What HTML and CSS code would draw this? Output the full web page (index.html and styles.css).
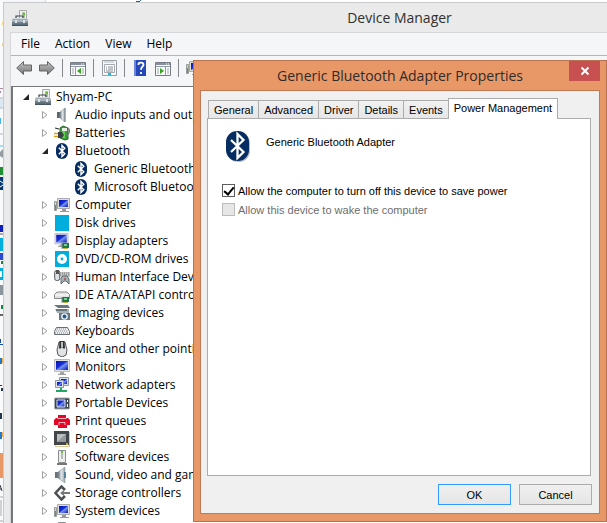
FILE: index.html
```html
<!DOCTYPE html>
<html lang="en">
<head>
<meta charset="utf-8">
<title>Device Manager</title>
<link rel="stylesheet" href="styles.css">
</head>
<body>
<svg class="defs" aria-hidden="true">
  <defs>
    <linearGradient id="metal" x1="0" y1="0" x2="0" y2="1"><stop offset="0" stop-color="#b5bec5"/><stop offset="1" stop-color="#536574"/></linearGradient>
    <linearGradient id="silver" x1="0" y1="0" x2="1" y2="0"><stop offset="0" stop-color="#59656d"/><stop offset=".45" stop-color="#e4e8ea"/><stop offset="1" stop-color="#9ba3a8"/></linearGradient>
    <linearGradient id="screen" x1="0" y1="0" x2="1" y2="1"><stop offset="0" stop-color="#0510b8"/><stop offset=".45" stop-color="#1732d8"/><stop offset=".55" stop-color="#7893f4"/><stop offset="1" stop-color="#0618b0"/></linearGradient>
    <linearGradient id="grayarrow" x1="0" y1="0" x2="0" y2="1"><stop offset="0" stop-color="#c2c2c2"/><stop offset="1" stop-color="#777"/></linearGradient>
    <symbol id="closed" viewBox="0 0 8 8"><path d="M1.5 0.5v7L6 4z" fill="#fff" stroke="#a0a0a0"/></symbol>
    <symbol id="toolbox" viewBox="0 0 16 16"><path d="M7.5.5h7v9h-7z" fill="#f0f2f0" stroke="#a7aaa8"/><path d="M10.5 2.5h2v5h-2z" fill="#c4dfaf" stroke="#8da582" stroke-width=".6"/><path d="M11 3h2v2h-2z" fill="#63bd2c"/><path d="M4 8V6h7v2" fill="none" stroke="#3c4347" stroke-width="1.2"/><path d="M1 8h14l1 3v4H0v-4z" fill="url(#metal)"/><path d="M1.5 8.5h13M.5 11h15" stroke="#dbe3e7" stroke-width=".8"/><path d="M3 10h2v3H3zm8 0h2v3h-2z" fill="#dce1e2"/><path d="M0 15.5h16" stroke="#46545e"/></symbol>
    <symbol id="speaker" viewBox="0 0 16 16"><path d="M3 5h3v6H3z" fill="#59656d"/><path d="M6 5l5-4v14l-5-4z" fill="url(#silver)" stroke="#929da4" stroke-width=".6"/><path d="M11 1v14" stroke="#7b878e"/></symbol>
    <symbol id="sound" viewBox="0 0 16 16"><path d="M1 5h4v6H1z" fill="#66737c"/><path d="M4 5l7-5v16l-7-5z" fill="url(#silver)" stroke="#8a979f" stroke-width=".6"/><path d="M11 5v6" stroke="#35708d" stroke-width="1.5"/></symbol>
    <symbol id="battery" viewBox="0 0 16 16"><path d="M6 3l3-2 5 2v11l-3 1-5-2z" fill="#36a336" stroke="#28672b"/><path d="M8 3h5v3H8z" fill="#e6eee4"/><path d="M8 6h3v7H8z" fill="#62ce50"/><path d="M14 3c3 2 1 7-2 7" fill="none" stroke="#777" stroke-width="1.2"/><path d="M1 3l4 1" stroke="#222"/><path d="M0 8.5h5m-5 3h5" stroke="#d6a318" stroke-width="1.5"/><path d="M4 7h4l2 3-2 3H4z" fill="#3c4144"/></symbol>
    <symbol id="bluetooth" viewBox="0 0 16 16"><rect x="2" y="0" width="12" height="16" rx="6" fill="#062d62"/><path d="M4.800 4.800l6 6L8 13.600V2.400l2.800 2.800-6 6" fill="none" stroke="#fff" stroke-width="1.4"/></symbol>
    <symbol id="monitor" viewBox="0 0 16 16"><path d="M.5.5h15v12H.5z" fill="#e2e4e1" stroke="#bbb"/><path d="M2 2h12v9H2z" fill="url(#screen)"/><path d="M6 13h4v2H6z" fill="#a6a9a8"/><path d="M4 15.3h8" stroke="#888"/></symbol>
    <symbol id="computer" viewBox="0 0 16 16"><path d="M.5 4.5h2v9h-2z" fill="#d6d6d1" stroke="#959b96"/><path d="M1 8h1v5H1z" fill="#49a652"/><path d="M3.500 1.500h12v10h-12z" fill="#dedfdb" stroke="#aaa"/><path d="M5 3h9v7H5z" fill="url(#screen)"/><path d="M8 12h4v2H8zM6 14h9v1H6z" fill="#999"/></symbol>
    <symbol id="disk" viewBox="0 0 16 16"><path d="M1 0h14v16H1z" fill="#00aede"/></symbol>
    <symbol id="card" viewBox="0 0 16 16"><path d="M8 10h7v5H8z" fill="#147a46"/><path d="M8 10v6" stroke="#888"/><path d="M10 11h3v2h-3z" fill="#83c996"/><path d="M9 15.5h5" stroke="#d0ad35"/></symbol>
    <symbol id="display" viewBox="0 0 16 16"><use href="#monitor" width="15" height="14"/><use href="#card"/></symbol>
    <symbol id="dvd" viewBox="0 0 16 16"><path d="M1 0h14v16H1z" fill="#00aede"/><circle cx="8" cy="8" r="5" fill="#fff"/><circle cx="8" cy="8" r="1.4" fill="#00aede"/></symbol>
    <symbol id="hid" viewBox="0 0 16 16"><rect x=".7" y="1.5" width="5" height="10" rx="2" fill="#dee2e4" stroke="#4f5559"/><path d="M2 1h3v4H2z" fill="#555"/><path d="M6 3h10v5H6z" fill="#c3c7c9"/><path d="M6 4h9M6 6h9" stroke="#777" stroke-dasharray="1 1"/><path d="M7 15V9l2-2h4l2 3v5l-3-3h-2z" fill="#a4b1b9" stroke="#5e6a72"/><circle cx="11" cy="10" r="1" fill="#ca3f4a"/></symbol>
    <symbol id="ide" viewBox="0 0 16 16"><path d="M.5 7.500L3 5h10l2.500 2.500v4h-15z" fill="#dfe2e2" stroke="#888"/><path d="M1 8h14" stroke="#fff"/><use href="#card"/></symbol>
    <symbol id="imaging" viewBox="0 0 16 16"><path d="M0 0h14l2 3H4z" fill="#6b7780"/><path d="M1 4h14v4H3z" fill="#a7b2b8"/><path d="M2 5h11" stroke="#31383c"/><path d="M5 8h11v7H5z" fill="#687680"/><circle cx="10.5" cy="11.5" r="3.3" fill="#edf2f4"/><circle cx="10.5" cy="11.5" r="1.9" fill="#215b8d"/></symbol>
    <symbol id="keyboard" viewBox="0 0 16 16"><path d="M2.500 4.500h11l2 4v3H.5v-3z" fill="#eceef0" stroke="#686e75"/><path d="M3 6h10M2 8h12M1 10h14" stroke="#868c93" stroke-dasharray="1 1"/></symbol>
    <symbol id="mouse" viewBox="0 0 16 16"><path d="M5 1h6l2 8-1 5-4 2-4-2-1-5z" fill="#dfe3e5" stroke="#555"/><path d="M5.500 0L5 7l1 1 2-2 2 2 1-1-.5-7z" fill="#303437"/><path d="M8 1v5" stroke="#eee" stroke-width="1.500"/></symbol>
    <symbol id="network" viewBox="0 0 16 16"><path d="M5.500.5h9v8h-9z" fill="#d4dce6" stroke="#939da8"/><path d="M7 2h6v5H7z" fill="url(#screen)"/><path d="M1.500 3.500h8v7h-8z" fill="#dfe3eb" stroke="#8c98a6"/><path d="M3 5h5v4H3z" fill="url(#screen)"/><path d="M7 11v3" stroke="#20a963" stroke-width="2"/><path d="M2 14h11" stroke="#20a963" stroke-width="2"/></symbol>
    <symbol id="portable" viewBox="0 0 16 16"><rect x=".5" y="3" width="15" height="11" rx="1" fill="#3e4650" stroke="#a9aeb2"/><path d="M3 5h8v7H3z" fill="url(#screen)" stroke="#dce2ef"/><path d="M13 5h1v2h-1zm0 4h1v3h-1z" fill="#fff"/></symbol>
    <symbol id="printer" viewBox="0 0 16 16"><path d="M4 2h8v3h2l2 2v5h-3v3H4v-3H0V7l2-2h2z" fill="#e50728"/><path d="M3.500 5.500h9M5 12V9.500h6V12" fill="none" stroke="#fff" stroke-width=".7"/><path d="M6 10h4v5H6z" fill="#e50728"/></symbol>
    <symbol id="processor" viewBox="0 0 16 16"><path d="M1.500 1.500h14v14h-14z" fill="none" stroke="#bf8f25" stroke-dasharray="1 1"/><path d="M0 0h15v14H0z" fill="#42464a"/><path d="M3 3h9v8H3z" fill="#b9bcbc"/><path d="M3 11l9-8v8z" fill="#92979a"/><path d="M12 12h2v2h-2z" fill="#d8a52e"/></symbol>
    <symbol id="software" viewBox="0 0 16 16"><path d="M4.500 1.500h7v12h-7z" fill="#eceeed" stroke="#898d8e"/><path d="M7 3h2v7H7z" fill="#b6bbb8"/><path d="M7 2h2v2H7z" fill="#62c63b"/><path d="M3 15h10" stroke="#777" stroke-width="2"/></symbol>
    <symbol id="storage" viewBox="0 0 16 16"><path d="M11 5L7.500 1.500 1.500 8l6 6.500L11 11" fill="none" stroke="#4d5052" stroke-width="2.500"/><path d="M6 8l4-3v2h6v2h-6v2z" fill="#777"/></symbol>
  </defs>
</svg>

<svg class="desktop-edge" viewBox="0 0 3 523" width="3" height="523" aria-hidden="true">
  <path d="M0 0h3v523H0z" fill="#f8fafc"/><path d="M2 22h1v3H2zm0 21h1v3H2z" fill="#f5d592"/><path d="M0 88h3v1H0zm0 3h1v2H0z" fill="#ad889f"/>
  <path d="M0 99h3v8H0z" fill="#dbe7f5"/><path d="M0 98h3M0 108h3M0 134h3" stroke="#a9b2bf"/><path d="M0 118h1v6H0z" fill="#49b4e7"/><path d="M0 146h3" stroke="#55bbe5"/>
  <path d="M0 152l3-3v9l-3-2z" fill="#929ca2"/><path d="M0 167h3v8H0z" fill="#218d34"/><path d="M0 177h3v13H0z" fill="#073773"/><path d="M0 181l3 2M0 187l3-2" stroke="#fff"/>
  <path d="M0 225h3v7H0z" fill="#1020bd"/><path d="M0 233h3v2H0z" fill="#aaa"/><path d="M0 238h3v13H0zm0 30h3v12H0z" fill="#00aede"/><path d="M0 253h3v7H0z" fill="#2849d3"/><path d="M1 261h2v3H1zm0 44h2v4H1z" fill="#188345"/><path d="M0 271h2v6H0z" fill="#fff"/><path d="M0 285h3v10H0z" fill="#89949d"/><path d="M0 314h3v2H0z" fill="#666"/>
  <path d="M0 344h3v1H0zm0-5h1v4H0z" fill="#164c9a"/><path d="M0 358h2v6H0zm0 74h2v7H0z" fill="#2478c8"/><path d="M2 358h1v5H2zm0 74h1v5H2z" fill="#efb255"/><path d="M0 385h2v1H0zm1 3h2v3H1zm-1 25h2v6H0z" fill="#23364c"/>
  <path d="M0 453h3v25H0z" fill="#e89867"/><path d="M0 485l2 6M0 489h2" stroke="#334"/><path d="M0 497h3M1 500v16M0 521h3" stroke="#aaa"/>
</svg>
<svg class="desktop-top" viewBox="0 0 604 2" aria-hidden="true"><path d="M0 0h42v2H0z" fill="#f4f6f9"/><path d="M42 0h1v2h-1z" fill="#d5d8dc"/><path d="M133 1h4v1h-4z" fill="#44546a"/><path d="M137 0h1v1h-1z" fill="#3976b5"/></svg>

<main class="manager">
  <header class="manager-title"><svg class="icon"><use href="#toolbox"/></svg><h1>Device Manager</h1></header>
  <div class="client">
    <nav class="menu"><button>File</button><button>Action</button><button>View</button><button>Help</button></nav>
    <div class="toolbar">
      <button aria-label="Back"><svg class="icon" viewBox="0 0 16 16"><path d="M.7 8L7.500 1.500V5h8v6h-8v3.500z" fill="url(#grayarrow)" stroke="#646464"/></svg></button>
      <button aria-label="Forward"><svg class="icon" viewBox="0 0 16 16"><path d="M15.300 8L8.500 1.500V5h-8v6h8v3.500z" fill="url(#grayarrow)" stroke="#646464"/></svg></button>
      <i class="separator"></i>
      <button aria-label="Show console tree"><svg class="icon" viewBox="0 0 16 16"><path d="M.5 2.500h15v13H.5z" fill="#fafcfb" stroke="#777d85"/><path d="M1 3h14v2H1z" fill="#8690a0"/><path d="M11 4h3" stroke="#fff" stroke-dasharray="1 1"/><path d="M1 6.500h14M5.500 7v8" stroke="#939ba5"/><path d="M2 9h2m-2 2h2m-2 2h2m8-4h2m-2 2h2m-2 2h2" stroke="#a2a8ad"/><path d="M11 8v6L7 11z" fill="#36a321"/></svg></button>
      <i class="separator"></i>
      <button aria-label="Properties"><svg class="icon" viewBox="0 0 16 16"><path d="M1.500.5h14v15h-14z" fill="#f6f8f9" stroke="#999fa5"/><path d="M3.500 4.500h10v8h-10z" fill="#fff" stroke="#a7aaaf"/><path d="M3 2h10" stroke="#b4bac0"/><path d="M5 7h1m1 0h5M5 9h1m1 0h5M5 11h7" stroke="#868c94"/><path d="M7 14h3" stroke="#21b8df" stroke-width="2"/></svg></button>
      <i class="separator"></i>
      <button aria-label="Help topics"><svg class="icon" viewBox="0 0 16 16"><path d="M2 0h12v16H2z" fill="#2649b9"/><path d="M2 0h2v16H2z" fill="#6d86d8"/><path d="M6.500 5V4c0-2 5-2 5 .7 0 2-2.500 2-2.500 5M9 12v2" fill="none" stroke="#fff" stroke-width="1.8"/></svg></button>
      <button aria-label="Show action pane"><svg class="icon" viewBox="0 0 16 16"><path d="M.5 2.500h15v13H.5z" fill="#fafcfb" stroke="#777d85"/><path d="M1 3h14v2H1z" fill="#8690a0"/><path d="M11 4h3" stroke="#fff" stroke-dasharray="1 1"/><path d="M1 6.500h14M10.500 7v8" stroke="#939ba5"/><path d="M12 9h2m-2 2h2m-2 2h2M2 9h2m-2 2h2m-2 2h2" stroke="#a2a8ad"/><path d="M5 8v6l4-3z" fill="#36a321"/></svg></button>
      <i class="separator"></i>
      <button aria-label="Scan for hardware changes"><svg class="icon"><use href="#computer"/></svg></button>
    </div>
    <ul class="tree">
      <li class="root"><svg class="arrow" viewBox="0 0 8 8"><path d="M7 1v6H1z" fill="#262626"/></svg><svg class="icon"><use href="#toolbox"/></svg><span>Shyam-PC</span></li>
      <li><svg class="arrow"><use href="#closed"/></svg><svg class="icon"><use href="#speaker"/></svg><span>Audio inputs and outputs</span></li>
      <li><svg class="arrow"><use href="#closed"/></svg><svg class="icon"><use href="#battery"/></svg><span>Batteries</span></li>
      <li><svg class="arrow" viewBox="0 0 8 8"><path d="M7 1v6H1z" fill="#262626"/></svg><svg class="icon"><use href="#bluetooth"/></svg><span>Bluetooth</span></li>
      <li class="child"><svg class="icon"><use href="#bluetooth"/></svg><span>Generic Bluetooth A</span></li>
      <li class="child"><svg class="icon"><use href="#bluetooth"/></svg><span>Microsoft Bluetooth</span></li>
      <li><svg class="arrow"><use href="#closed"/></svg><svg class="icon"><use href="#computer"/></svg><span>Computer</span></li>
      <li><svg class="arrow"><use href="#closed"/></svg><svg class="icon"><use href="#disk"/></svg><span>Disk drives</span></li>
      <li><svg class="arrow"><use href="#closed"/></svg><svg class="icon"><use href="#display"/></svg><span>Display adapters</span></li>
      <li><svg class="arrow"><use href="#closed"/></svg><svg class="icon"><use href="#dvd"/></svg><span>DVD/CD-ROM drives</span></li>
      <li><svg class="arrow"><use href="#closed"/></svg><svg class="icon"><use href="#hid"/></svg><span>Human Interface Devices</span></li>
      <li><svg class="arrow"><use href="#closed"/></svg><svg class="icon"><use href="#ide"/></svg><span>IDE ATA/ATAPI controllers</span></li>
      <li><svg class="arrow"><use href="#closed"/></svg><svg class="icon"><use href="#imaging"/></svg><span>Imaging devices</span></li>
      <li><svg class="arrow"><use href="#closed"/></svg><svg class="icon"><use href="#keyboard"/></svg><span>Keyboards</span></li>
      <li><svg class="arrow"><use href="#closed"/></svg><svg class="icon"><use href="#mouse"/></svg><span>Mice and other pointing</span></li>
      <li><svg class="arrow"><use href="#closed"/></svg><svg class="icon"><use href="#monitor"/></svg><span>Monitors</span></li>
      <li><svg class="arrow"><use href="#closed"/></svg><svg class="icon"><use href="#network"/></svg><span>Network adapters</span></li>
      <li><svg class="arrow"><use href="#closed"/></svg><svg class="icon"><use href="#portable"/></svg><span>Portable Devices</span></li>
      <li><svg class="arrow"><use href="#closed"/></svg><svg class="icon"><use href="#printer"/></svg><span>Print queues</span></li>
      <li><svg class="arrow"><use href="#closed"/></svg><svg class="icon"><use href="#processor"/></svg><span>Processors</span></li>
      <li><svg class="arrow"><use href="#closed"/></svg><svg class="icon"><use href="#software"/></svg><span>Software devices</span></li>
      <li><svg class="arrow"><use href="#closed"/></svg><svg class="icon"><use href="#sound"/></svg><span>Sound, video and game</span></li>
      <li><svg class="arrow"><use href="#closed"/></svg><svg class="icon"><use href="#storage"/></svg><span>Storage controllers</span></li>
      <li><svg class="arrow"><use href="#closed"/></svg><svg class="icon"><use href="#computer"/></svg><span>System devices</span></li>
      <li><svg class="arrow"></svg><svg class="icon"><use href="#software"/></svg></li>
    </ul>
  </div>
</main>

<section class="dialog" role="dialog" aria-labelledby="dialog-title">
  <header class="dialog-title"><h2 id="dialog-title">Generic Bluetooth Adapter Properties</h2><button class="close" aria-label="Close"><svg viewBox="0 0 10 10"><path d="M1.500 1.500l7 7m0-7l-7 7" stroke="#fff" stroke-width="2"/></svg></button></header>
  <div class="dialog-body">
    <div class="tabs" role="tablist"><button role="tab">General</button><button role="tab">Advanced</button><button role="tab">Driver</button><button role="tab">Details</button><button role="tab">Events</button><button class="active" role="tab" aria-selected="true">Power Management</button></div>
    <div class="panel" role="tabpanel">
      <div class="device"><svg viewBox="0 0 24 32"><rect x="1" y="1" width="23" height="30" rx="11" fill="#b8bec6"/><rect width="23" height="30" rx="11" fill="#062d62"/><path d="M5 9l12.500 12-6 6V3l6 6L5 21" fill="none" stroke="#fff" stroke-width="2.300"/></svg><p>Generic Bluetooth Adapter</p></div>
      <label><input type="checkbox" checked><span>Allow the computer to turn off this device to save power</span></label>
      <label class="disabled"><input type="checkbox" disabled><span>Allow this device to wake the computer</span></label>
    </div>
    <footer><button class="primary">OK</button><button>Cancel</button></footer>
  </div>
</section>
</body>
</html>
```
FILE: styles.css
```css
* { box-sizing: border-box; }

body {
  margin: 0;
  padding: 2px 0 0 3px;
  height: 100vh;
  overflow: hidden;
  position: relative;
  background: #fff;
  color: #000;
  font: 12px/18px "Open Sans", "Noto Sans", sans-serif;
}

h1, h2, p, ul { margin: 0; padding: 0; font-weight: 400; }
button { margin: 0; padding: 0; border: 0; background: none; color: inherit; font: inherit; }
.defs { position: absolute; width: 0; height: 0; }
.desktop-edge { position: absolute; left: 0; top: 0; }
.desktop-top { position: absolute; left: 3px; top: 0; width: 604px; height: 2px; }
.icon { width: 16px; height: 16px; flex: none; display: block; }

.manager {
  height: 100%;
  display: flex;
  flex-direction: column;
  padding-left: 6px;
  background: #eaeaea;
  border: solid #c9cacc;
  border-width: 1px 0 0 1px;
}
.manager-title { display: flex; align-items: center; flex: none; height: 29px; padding-left: 2px; }
.manager-title h1 { flex: 1; padding-left: 164px; text-align: center; color: #303030; font-size: 14px; }
.client { flex: 1; min-height: 0; display: flex; flex-direction: column; background: #f4f6f8; border: solid #d4d6d9; border-width: 1px 0 0 1px; }
.menu { display: flex; flex: none; gap: 15px; height: 23px; padding-left: 10px; border-bottom: 1px solid #b1b4b8; }
.toolbar { display: flex; flex: none; align-items: center; gap: 7px; height: 24px; padding: 0 5px; }
.separator { width: 1px; height: 18px; background: #85888c; }
.tree { flex: 1; margin-top: 6px; padding-top: 1px; overflow: hidden; list-style: none; background: #fff; border: solid #747678; border-width: 1px 0 0 2px; }
.tree li { display: flex; align-items: center; height: 18px; gap: 5px; padding-left: 28px; white-space: nowrap; }
.tree .root { padding-left: 9px; }
.tree .child { padding-left: 60px; }
.tree .arrow { width: 8px; height: 8px; flex: none; }

.dialog {
  position: absolute;
  inset: 60px 0 1px 193px;
  display: flex;
  flex-direction: column;
  padding: 0 6px 7px;
  background: #e89867;
  border: 1px solid #b87250;
}
.dialog-title { position: relative; flex: none; height: 29px; text-align: center; }
.dialog-title h2 { color: #302b29; font-size: 14px; line-height: 29px; }
.close { position: absolute; top: 0; right: 0; display: grid; place-items: center; width: 31px; height: 20px; background: #c75050; }
.close svg { width: 10px; height: 10px; }
.dialog-body { flex: 1; display: flex; flex-direction: column; padding: 7px 7px 8px 6px; background: #f0f0f0; border: 1px solid #c37a54; font: 11px/16px "Liberation Sans", Arial, sans-serif; }
.tabs { display: flex; align-items: flex-end; height: 20px; padding-left: 1px; }
.tabs button { height: 18px; padding: 0 5px; border: 1px solid #acacac; border-bottom: 0; background: linear-gradient(#f1f1f1, #e6e6e6); }
.tabs button + button { margin-left: -1px; }
.tabs .active { position: relative; z-index: 1; height: 21px; margin-bottom: -1px; padding-bottom: 2px; background: #fff; }
.panel { flex: 1; margin-right: 1px; padding: 12px 14px; border: 1px solid #acacac; background: #fff; }
.device { display: flex; gap: 16px; height: 50px; padding-left: 4px; }
.device svg { width: 24px; height: 32px; }
.device p { padding-top: 3px; }
.panel label { display: flex; align-items: center; gap: 3px; height: 19px; }
.panel input { appearance: none; flex: none; display: grid; place-items: center; width: 13px; height: 13px; margin: 0; border: 1px solid #5c5c5c; background: #fff; }
.panel input:checked::before { content: ""; width: 4px; height: 8px; margin-bottom: 2px; border: solid #000; border-width: 0 2px 2px 0; transform: rotate(40deg); }
.panel .disabled { color: #6d6d6d; }
.panel input:disabled { border-color: #bcbcbc; background: #e6e6e6; }
footer { display: flex; justify-content: flex-end; gap: 8px; padding-top: 8px; }
footer button { width: 73px; height: 21px; border: 1px solid #acacac; background: linear-gradient(#f0f0f0, #e5e5e5); }
footer .primary { border-color: #3399ff; }
```
